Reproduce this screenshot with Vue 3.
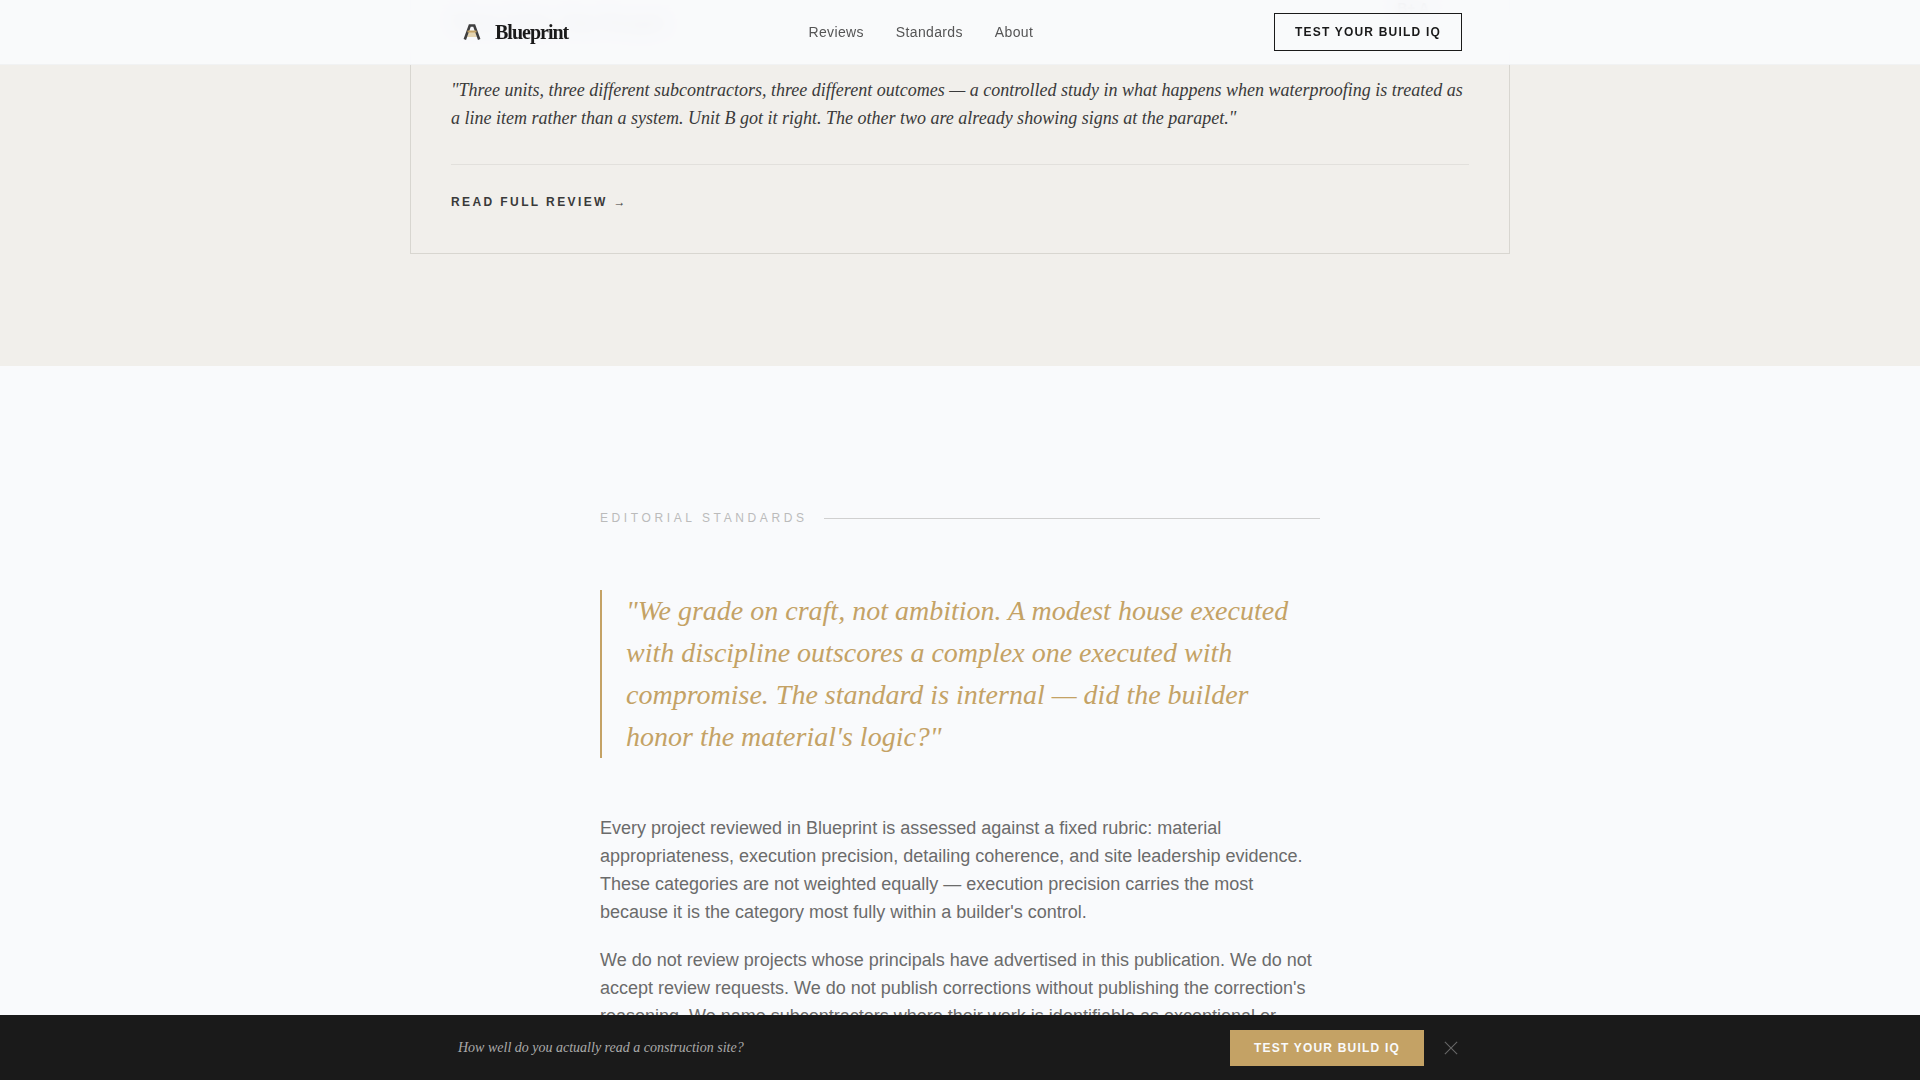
<template>
  <div class="page">
    <header class="site-nav">
      <div class="nav-inner">
        <a class="logo" href="#">
          <svg class="logo-mark" viewBox="0 0 18 16" aria-hidden="true">
            <path d="M6 7.500 H12 L14 13 H4 Z" fill="#e4d4b0" />
            <path d="M1.800 15.500 L6.800 1.500 H11.200 L16.200 15.500" fill="none" stroke="#3f3f3f" stroke-width="2.600" />
            <path d="M4.500 7.500 H13.500" stroke="#c4a265" stroke-width="2" />
          </svg>
          <span class="logo-text">Blueprint</span>
        </a>
        <nav class="nav-links">
          <a v-for="link in navLinks" :key="link" href="#">{{ link }}</a>
        </nav>
        <button type="button" class="nav-cta">TEST YOUR BUILD IQ</button>
      </div>
    </header>

    <section class="reviews">
      <article class="review-card">
        <div class="review-head">
          <h3>Three Units, One Parapet</h3>
          <span class="grade">B+ A</span>
        </div>
        <p class="review-quote">"Three units, three different subcontractors, three different outcomes — a controlled study in what happens when waterproofing is treated as a line item rather than a system. Unit B got it right. The other two are already showing signs at the parapet."</p>
        <div class="review-foot">
          <a href="#" class="read-more">READ FULL REVIEW <span class="arrow">→</span></a>
        </div>
      </article>
    </section>

    <section class="standards">
      <div class="standards-inner">
        <div class="section-label">
          <span>EDITORIAL STANDARDS</span>
        </div>
        <blockquote>"We grade on craft, not ambition. A modest house executed with discipline outscores a complex one executed with compromise. The standard is internal — did the builder honor the material's logic?"</blockquote>
        <p v-for="(para, i) in paragraphs" :key="i" class="body-text">{{ para }}</p>
      </div>
    </section>

    <aside class="quiz-bar">
      <div class="quiz-inner">
        <p>How well do you actually read a construction site?</p>
        <div class="quiz-actions">
          <button type="button" class="quiz-cta">TEST YOUR BUILD IQ</button>
          <button type="button" class="quiz-close" aria-label="Dismiss">
            <svg viewBox="0 0 16 16" aria-hidden="true">
              <path d="M1 1 L15 15 M15 1 L1 15" fill="none" stroke="#666" stroke-width="1.3" />
            </svg>
          </button>
        </div>
      </div>
    </aside>
  </div>
</template>

<script setup>
const navLinks = ['Reviews', 'Standards', 'About']

const paragraphs = [
  "Every project reviewed in Blueprint is assessed against a fixed rubric: material appropriateness, execution precision, detailing coherence, and site leadership evidence. These categories are not weighted equally — execution precision carries the most because it is the category most fully within a builder's control.",
  "We do not review projects whose principals have advertised in this publication. We do not accept review requests. We do not publish corrections without publishing the correction's reasoning. We name subcontractors where their work is identifiable as exceptional or deficient."
]
</script>

<style>
html, body {
  margin: 0;
  height: 100%;
  overflow: hidden;
  background: #f9fafc;
}
</style>

<style scoped>
.page {
  height: 1080px;
  overflow: hidden;
  font-family: "Liberation Sans", Arial, sans-serif;
  color: #1a1a1a;
}

.site-nav {
  position: fixed;
  top: 0;
  left: 0;
  right: 0;
  z-index: 10;
  height: 64px;
  background: rgba(249, 250, 252, 0.95);
  backdrop-filter: blur(8px);
  border-bottom: 1px solid rgba(0, 0, 0, 0.03);
}

.nav-inner {
  width: 1100px;
  height: 100%;
  margin: 0 auto;
  padding: 0 48px;
  box-sizing: border-box;
  display: flex;
  align-items: center;
}

.logo {
  display: flex;
  align-items: center;
  gap: 14px;
  width: 345.500px;
  padding-left: 5px;
  box-sizing: content-box;
  color: #1a1a1a;
  text-decoration: none;
}

.logo-mark {
  width: 18px;
  height: 16px;
}

.logo-text {
  font-family: "Liberation Serif", "Times New Roman", serif;
  font-weight: 700;
  font-size: 20px;
  letter-spacing: -1px;
}

.nav-links {
  display: flex;
  gap: 32px;
  flex: 1;
}

.nav-links a {
  font-size: 14px;
  letter-spacing: 0.35px;
  color: #555;
  text-decoration: none;
}

.nav-cta {
  width: 188px;
  height: 38px;
  padding: 0;
  border: 1.5px solid #1a1a1a;
  background: transparent;
  color: #1a1a1a;
  font-family: inherit;
  font-size: 12px;
  font-weight: 700;
  letter-spacing: 1.2px;
}

.reviews {
  background: #f1efeb;
  padding-bottom: 112px;
}

.review-card {
  width: 1100px;
  margin: 0 auto;
  padding: 0 40px 42px;
  box-sizing: border-box;
  border: 1px solid #d8d6d0;
  border-top: 0;
}

.review-head {
  display: flex;
  justify-content: space-between;
  align-items: flex-start;
  height: 76px;
}

.review-head h3 {
  margin: 10px 0 0;
  font-family: "Liberation Serif", serif;
  font-size: 21px;
  font-weight: 400;
  color: #333;
}

.grade {
  margin-right: 40px;
  font-size: 14px;
  font-weight: 700;
}

.review-quote {
  margin: 0;
  font-family: "Liberation Serif", serif;
  font-style: italic;
  font-size: 18px;
  line-height: 28px;
  color: #3a3a3a;
}

.review-foot {
  margin-top: 32px;
  padding-top: 28px;
  border-top: 1px solid #e2e0dc;
}

.read-more {
  display: block;
  line-height: 18px;
  font-size: 12px;
  font-weight: 700;
  letter-spacing: 2.4px;
  color: #3a3a3a;
  text-decoration: none;
}

.arrow {
  font-weight: 400;
}

.standards {
  padding-top: 145px;
}

.standards-inner {
  width: 720px;
  margin: 0 auto;
}

.section-label {
  display: flex;
  align-items: center;
  gap: 16px;
  margin-bottom: 65px;
  font-size: 12px;
  letter-spacing: 3.6px;
  color: #bbb;
}

.section-label::after {
  content: "";
  flex: 1;
  height: 1px;
  background: #d0d0d0;
}

blockquote {
  margin: 0 0 56px;
  padding-left: 24px;
  border-left: 2px solid #c4a265;
  font-family: "Liberation Serif", serif;
  font-style: italic;
  font-size: 28px;
  line-height: 42px;
  color: #c4a265;
}

.body-text {
  margin: 0 0 20px;
  font-size: 18px;
  line-height: 28px;
  color: #6b6b6b;
}

.quiz-bar {
  position: fixed;
  left: 0;
  right: 0;
  bottom: 0;
  z-index: 10;
  height: 65px;
  background: #1a1a1a;
}

.quiz-inner {
  width: 1100px;
  height: 100%;
  margin: 0 auto;
  padding: 0 48px;
  box-sizing: border-box;
  display: flex;
  align-items: center;
  justify-content: space-between;
}

.quiz-inner p {
  margin: 0;
  font-family: "Liberation Serif", serif;
  font-style: italic;
  font-size: 14px;
  color: #aaa;
}

.quiz-actions {
  display: flex;
  align-items: center;
  gap: 20px;
}

.quiz-cta {
  width: 194px;
  height: 36px;
  padding: 0;
  border: 0;
  background: #c4a265;
  color: #f9fafc;
  font-family: inherit;
  font-size: 12px;
  font-weight: 700;
  letter-spacing: 1.2px;
}

.quiz-close {
  display: flex;
  width: 14px;
  height: 14px;
  padding: 0;
  margin-right: 4px;
  border: 0;
  background: none;
}

.quiz-close svg {
  width: 100%;
  height: 100%;
}
</style>
